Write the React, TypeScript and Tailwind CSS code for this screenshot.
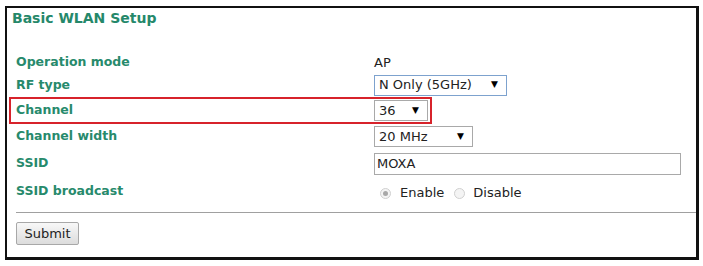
import { ReactNode } from "react";

const labelClass = "w-[358px] shrink-0 font-bold text-[12.5px] text-[#278a6c]";

function FakeSelect({ value, width, focused }: { value: string; width: string; focused?: boolean }) {
  return (
    <div
      className={
        "flex items-center justify-between h-[21px] bg-white pl-[4px] pr-[8px] text-[13px] text-[#222] border " +
        width +
        (focused ? " border-[#7da2ce]" : " border-[#a9a9a9]")
      }
    >
      <span>{value}</span>
      <span className="text-[9px] text-black">▼</span>
    </div>
  );
}

function Row({ label, height, children }: { label: string; height: string; children?: ReactNode }) {
  return (
    <div className={"flex items-center pl-[7px] " + height}>
      <div className={labelClass}>{label}</div>
      {children}
    </div>
  );
}

function Radio({ checked }: { checked?: boolean }) {
  return (
    <span className="flex items-center justify-center w-[11px] h-[11px] rounded-full border border-[#d0d0d0] bg-[#f4f4f4]">
      {checked && <span className="w-[5px] h-[5px] rounded-full bg-[#a8a8a8]" />}
    </span>
  );
}

export default function App() {
  return (
    <div className="w-[703px] h-[266px] bg-white pt-[6px] pl-[5px] font-['DejaVu_Sans',sans-serif]">
      <div className="w-[694px] h-[254px] border-l-2 border-t-2 border-r-[3px] border-b-[3px] border-[#111]">
        <div className="pl-[5px] pt-[2px] h-[44px] font-bold text-[14px] leading-4 text-[#25886a]">
          Basic WLAN Setup
        </div>
        <div className="pl-[2px]">
          <Row label="Operation mode" height="h-[21px]">
            <span className="text-[13px] text-[#222]">AP</span>
          </Row>
          <Row label="RF type" height="h-[24px]">
            <FakeSelect value="N Only (5GHz)" width="w-[133px]" focused />
          </Row>
          <div className="flex items-center w-[423px] h-[27px] pl-[5px] border-2 border-[#d7232b]">
            <div className={labelClass}>Channel</div>
            <FakeSelect value="36" width="w-[54px]" />
          </div>
          <Row label="Channel width" height="h-[25px]">
            <FakeSelect value="20 MHz" width="w-[99px]" />
          </Row>
          <Row label="SSID" height="h-[29px]">
            <div className="flex items-center w-[307px] h-[22px] border border-[#a9a9a9] pl-[2px] text-[13px] text-[#222]">
              MOXA
            </div>
          </Row>
          <Row label="SSID broadcast" height="h-[26px]">
            <div className="flex items-center pl-[6px] text-[13px] text-[#222] pt-[4px]">
              <Radio checked />
              <span className="ml-[9px]">Enable</span>
              <span className="ml-[10px]">
                <Radio />
              </span>
              <span className="ml-[8px]">Disable</span>
            </div>
          </Row>
        </div>
        <div className="ml-[9px] mt-[8px] border-t border-[#a0a0a0]" />
        <div className="pl-[9px] pt-[8px]">
          <button className="w-[63px] h-[23px] text-[13px] text-[#222] border border-[#a8a8a8] rounded-[2px] bg-gradient-to-b from-[#f8f8f8] to-[#dcdcdc]">
            Submit
          </button>
        </div>
      </div>
    </div>
  );
}
